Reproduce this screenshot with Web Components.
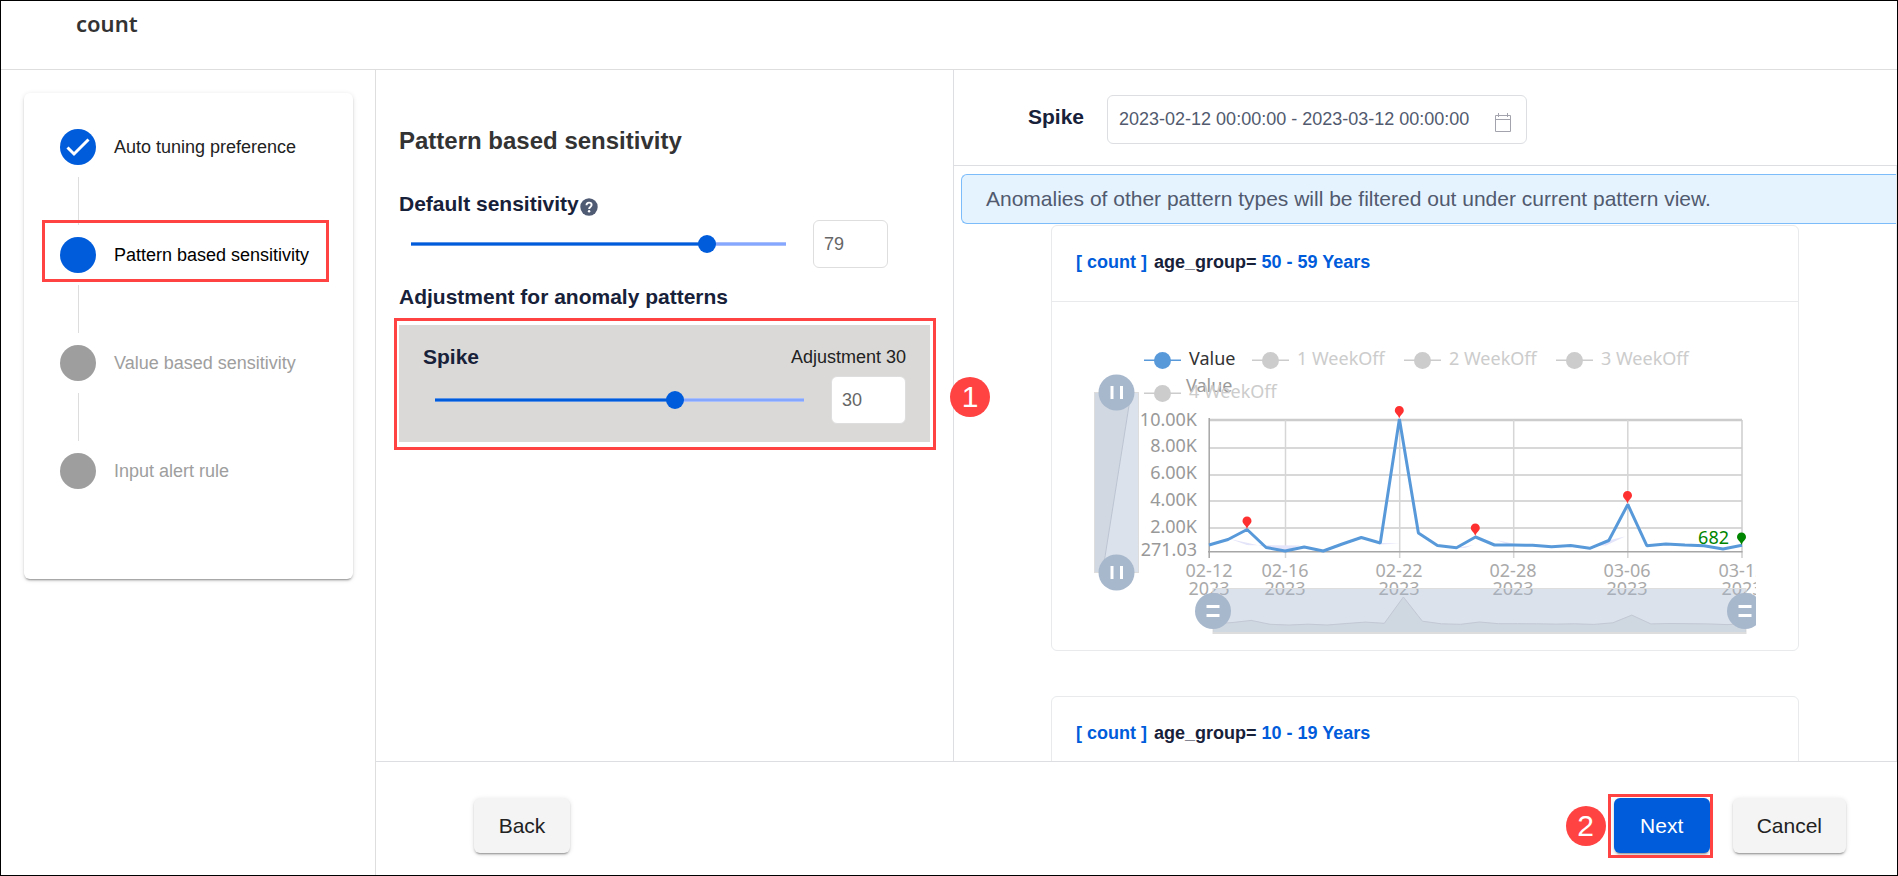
<!DOCTYPE html>
<html lang="en">
<head>
<meta charset="utf-8">
<title>count - Pattern based sensitivity</title>
<style>
html, body { margin: 0; height: 100%; }
body { font-family: "Liberation Sans", Arial, sans-serif; color: #172139; background: #fff; }
</style>
</head>
<body>
<tuning-app></tuning-app>
<script>
function define(name, render, after) {
  customElements.define(name, class extends HTMLElement {
    connectedCallback() {
      if (this.shadowRoot) return;
      const root = this.attachShadow({ mode: 'open' });
      root.innerHTML = '<style>*{box-sizing:border-box}</style>' + render(this);
      if (after) after(this, root);
    }
  });
}

/* Red frame with a numbered badge laid over the slotted content */
define('callout-frame', el => `
<style>
:host { display: block; position: relative; }
.frame { position: absolute; inset: var(--frame-inset); border: 3px solid #ff4343; pointer-events: none; }
.badge { position: absolute; top: var(--badge-top, 50%); width: 40px; height: 40px; margin-top: -20px; border-radius: 50%;
  background: #ff4343; color: #fff; font-size: 30px; line-height: 40px; text-align: center; }
.right { left: calc(100% + 17px); }
.left { right: calc(100% + 5px); }
</style>
<slot></slot>
<div class="frame">${el.getAttribute('number') ? `<span class="badge ${el.getAttribute('side')}">${el.getAttribute('number')}</span>` : ''}</div>`);

define('wizard-step', el => `
<style>
:host { display: block; color: #222; font-size: 18px; }
:host([state="current"]) { color: #000; }
:host([state="todo"]) { color: #9e9e9e; }
.row { display: flex; gap: 18px; line-height: 36px; }
.dot { width: 36px; height: 36px; border-radius: 50%; background: #005cdb; }
:host([state="todo"]) .dot { background: #9e9e9e; }
svg { display: block; }
</style>
<div class="row"><span class="dot">${el.getAttribute('state') === 'done'
  ? '<svg width="36" height="36" viewBox="0 0 36 36" fill="none" stroke="#fff" stroke-width="3"><path d="M7.500 18.500 14 25 28.500 10.500"/></svg>' : ''}</span><slot></slot></div>`);

define('wizard-steps', () => `
<style>
:host { display: block; padding: 36px 36px 90px; background: #fff; border-radius: 6px;
  box-shadow: 0 3px 1px -2px rgba(0,0,0,.2), 0 2px 2px 0 rgba(0,0,0,.14), 0 1px 5px 0 rgba(0,0,0,.12); }
.line { width: 1px; height: 48px; margin: 12px 18px; background: #ddd; }
callout-frame { --frame-inset: -17px -12px -9px -18px; }
</style>
<wizard-step state="done">Auto tuning preference</wizard-step>
<div class="line"></div>
<callout-frame><wizard-step state="current">Pattern based sensitivity</wizard-step></callout-frame>
<div class="line"></div>
<wizard-step state="todo">Value based sensitivity</wizard-step>
<div class="line"></div>
<wizard-step state="todo">Input alert rule</wizard-step>`);

define('sensitivity-slider', el => {
  const v = +el.getAttribute('value'), min = +el.getAttribute('min'), max = +el.getAttribute('max');
  return `
<style>
:host { display: block; }
.head { display: flex; justify-content: space-between; line-height: 24px; }
.title { display: flex; align-items: center; gap: 1px; }
label { font-size: 21px; font-weight: bold; }
.title svg { display: block; margin-top: 7px; }
.note { font-size: 18px; color: #222; }
.row { display: flex; align-items: center; gap: 18px; padding-left: 3px; margin-top: var(--row-gap, 4px); }
input { font: inherit; }
input[type=range] { appearance: none; flex: 1; min-width: 0; height: 18px; margin: 0; --fill: ${(v - min) / (max - min)};
  background:
    linear-gradient(#5a93e6 0 1px, #005cdb 1px 3px, #5a93e6 3px) 9px 7px / calc((100% - 18px) * var(--fill)) 4px no-repeat,
    linear-gradient(#a9bffb 0 1px, #86a7ff 1px 3px, #a9bffb 3px) 9px 7px / calc(100% - 18px) 4px no-repeat; }
input[type=range]::-webkit-slider-thumb { appearance: none; width: 18px; height: 18px; border-radius: 50%; background: #005cdb; }
input[type=number] { appearance: textfield; width: 75px; height: 48px; padding: 0 10px; border: 1px solid #dedede;
  border-radius: 6px; background: #fff; font-size: 18px; color: #666; }
input::-webkit-inner-spin-button { appearance: none; }
</style>
<div class="head"><span class="title"><label for="range">${el.getAttribute('label')}</label>${el.hasAttribute('help') ? `
<svg width="18" height="18" viewBox="0 0 18 18" role="img" aria-label="Help"><circle cx="9" cy="9" r="8.700" fill="#4f5a73"/><path d="M6.500 7.200C6.500 3.700 11.600 3.900 11.600 7c0 1.900-2.500 1.900-2.500 3.900" fill="none" stroke="#fff" stroke-width="1.900"/><circle cx="9.100" cy="13.200" r="1.200" fill="#fff"/></svg>` : ''}</span>
<span class="note"><slot></slot></span></div>
<div class="row"><input id="range" type="range" min="${min}" max="${max}" value="${v}">
<input id="num" type="number" aria-label="${el.getAttribute('label')} value" value="${v}"></div>`;
}, (el, root) => {
  const range = root.getElementById('range'), num = root.getElementById('num');
  const sync = (from, to) => {
    to.value = from.value;
    range.style.setProperty('--fill', (range.value - range.min) / (range.max - range.min));
  };
  range.addEventListener('input', () => sync(range, num));
  num.addEventListener('input', () => sync(num, range));
});

define('sensitivity-panel', () => `
<style>
:host { display: block; padding: 57px 23px 0; }
h1 { margin: 0 0 36px; font-size: 24px; line-height: 28px; color: #333; }
h2 { margin: 17px 0 16px; font-size: 21px; line-height: 24px; }
.default { margin-right: 42px; }
.pattern { padding: 20px 24px 18px; background: #dad9d7; --row-gap: 7px; }
callout-frame { --frame-inset: -7px -6px -8px -5px; --badge-top: 60%; }
</style>
<h1>Pattern based sensitivity</h1>
<sensitivity-slider class="default" label="Default sensitivity" help min="0" max="100" value="79"></sensitivity-slider>
<h2>Adjustment for anomaly patterns</h2>
<callout-frame number="1" side="right"><div class="pattern">
<sensitivity-slider label="Spike" min="-100" max="100" value="30">Adjustment 30</sensitivity-slider>
</div></callout-frame>`);

define('date-range', () => `
<style>
:host { display: flex; gap: 23px; padding: 25px 0 21px 74px; border-bottom: 1px solid #dcdee2; }
label { font-size: 21px; font-weight: bold; line-height: 24px; padding-top: 10px; }
.box { display: flex; align-items: center; width: 420px; height: 49px; padding: 0 14px 0 11px; border: 1px solid #dcdee2; border-radius: 6px; }
input { flex: 1; min-width: 0; height: 46px; padding: 0; border: 0; background: none; font: 18px "Liberation Sans", Arial, sans-serif; color: #515a6e; }
button { padding: 5px 0 0; border: 0; background: none; line-height: 0; }
</style>
<label for="dates">Spike</label>
<div class="box"><input id="dates" type="text" value="2023-02-12 00:00:00 - 2023-03-12 00:00:00">
<button type="button" aria-label="Open calendar"><svg width="18" height="19" viewBox="0 0 18 19" fill="none" stroke="#a3a3ad" stroke-width="1"><path d="M1.500 2.500H16.500V18.500H1.500ZM1.500 6.500H16.500M4.500 0V4M13.500 0V4"/></svg></button></div>`);

define('series-card', el => `
<style>
:host { display: block; border: 1px solid #e8eaec; border-radius: 6px; background: #fff; }
h3 { display: flex; gap: 5px; margin: 0; padding: 24px 24px 27px; border-bottom: 1px solid #e8eaec; font-size: 18px; line-height: 24px; }
b { color: #005cdb; }
.measure { margin-right: 2px; }
</style>
<h3><b class="measure">[ count ]</b><span>age_group=</span><b>${el.getAttribute('group')}</b></h3>
<slot></slot>`);

define('trend-chart', () => {
  const ys = [545,539.5,529.5,547.5,551,547,551,544,537.5,543,419,533,545.5,547.7,537,545,545,545.3,546.7,545.5,548.3,540.5,504.5,545.7,544,545,545.7,549,545.3];
  const step = 533 / 28;
  const line = ys.map((y, i) => `${(1209 + i * step).toFixed(1)},${y}`).join(' ');
  const mini = ys.map((y, i) => `${(1213 + i * step).toFixed(1)},${(625 - (551 - y) * .212).toFixed(1)}`).join(' ');
  const legend = (x, y, text, on) => `<g fill="${on ? '#5899da' : '#ccc'}"><rect x="${x}" y="${y - 1}" width="37" height="1.500"/><circle cx="${x + 18.5}" cy="${y}" r="8.500"/></g>
    <text x="${x + 45}" y="${y + 4.5}" fill="${on ? '#333' : '#ccc'}">${text}</text>`;
  const pin = (x, y, c) => `<path fill="${c}" d="M${x} ${y + 8}C${x - 1} ${y + 4} ${x - 4.5} ${y + 3} ${x - 4.5} ${y}A4.500 4.500 0 0 1 ${x + 4.5} ${y}C${x + 4.5} ${y + 3} ${x + 1} ${y + 4} ${x} ${y + 8}Z"/>`;
  const vHandle = y => `<circle cx="1116.500" cy="${y}" r="18" fill="#a7b7cc"/><path d="M1112 ${y - 6.5}v13M1121.500 ${y - 6.5}v13" stroke="#fff" stroke-width="3"/>`;
  const hHandle = x => `<circle cx="${x}" cy="611" r="18" fill="#a7b7cc"/><path d="M${x - 6.5} 606.500h13M${x - 6.5} 615.500h13" stroke="#fff" stroke-width="3"/>`;
  return `
<style>
:host { display: block; padding: 0 42px 0 40px; }
svg { display: block; width: 100%; height: auto; font-family: "Noto Sans", "Open Sans", sans-serif; font-size: 18px; }
</style>
<svg viewBox="1092 302 664 348" role="img" aria-label="Value by day">
<g fill="none" stroke="#ccc">
  <path stroke-width="1.300" d="M1209 448H1742M1209 475H1742M1209 501H1742M1209 528H1742"/>
  <path stroke-width="2.500" d="M1209 420H1742"/>
  <path stroke="#d6d6d6" stroke-width="1.500" d="M1285.500 420V558M1399.700 420V558M1513.700 420V558M1627.800 420V558"/>
  <path d="M1742 420V558" stroke-width="1.500"/>
</g>
<path d="M1209.200 418V558M1208 551.700H1742.500" stroke="#a6a6a6" stroke-width="1.500" fill="none"/>
<path d="M1230 539 1247 545 1300 545.500 1285 551 1266 547ZM1380 543l20 .5-20 1ZM1496 540l22 4.500h-10ZM1456 548l17-3-8 3ZM1608 540.500l17-4-19 9-10 0Z" fill="#e4e4fa"/>
<g fill="#999">
  <text x="1186" y="391.500">Value</text>
  <g text-anchor="end">
    <text x="1197" y="426">10.00K</text><text x="1197" y="452">8.00K</text><text x="1197" y="479">6.00K</text>
    <text x="1197" y="506">4.00K</text><text x="1197" y="533">2.00K</text><text x="1197" y="556">271.03</text>
  </g>
  <g text-anchor="middle" fill="#aaa">
    ${[['02-12', 1209], ['02-16', 1285], ['02-22', 1399], ['02-28', 1513], ['03-06', 1627], ['03-12', 1742]].map(([d, x]) =>
      `<text x="${x}" y="577">${d}</text><text x="${x}" y="595">2023</text>`).join('')}
  </g>
</g>
${legend(1144, 360.5, 'Value', true)}${legend(1252, 360.5, '1 WeekOff')}${legend(1404, 360.5, '2 WeekOff')}${legend(1556, 360.5, '3 WeekOff')}${legend(1144, 393.5, '4 WeekOff')}
<polyline points="${line}" fill="none" stroke="#5899da" stroke-width="3" stroke-linejoin="bevel"/>
${pin(1247, 521, '#ff3030')}${pin(1399.3, 410.5, '#ff3030')}${pin(1475.3, 528, '#ff3030')}${pin(1627.5, 495.5, '#ff3030')}${pin(1741.5, 537, '#008500')}
<text x="1729" y="543.500" text-anchor="end" fill="#008500">682</text>
<rect x="1094.500" y="392.500" width="44" height="180" fill="#a7b7cc" fill-opacity=".4" stroke="#ddd"/>
<path d="M1095 393H1131L1104 561V572H1095Z" fill="#8292a8" fill-opacity=".12"/>
<path d="M1131 393 1104 563" stroke="#bcc4d2"/>
${vHandle(392.5)}${vHandle(572.5)}
<rect x="1213" y="588.500" width="533" height="45" fill="#a7b7cc" fill-opacity=".4" stroke="#ddd"/>
<polygon points="1213,633 ${mini} 1746,633" fill="#8292a8" fill-opacity=".14"/>
<polyline points="${mini}" fill="none" stroke="#c3c9d4"/>
<path d="M1213 633H1746" stroke="#ddd" stroke-width="2"/>
${hHandle(1213)}${hHandle(1745)}
</svg>`;
});

define('preview-panel', () => `
<style>
:host { display: flex; flex-direction: column; overflow: hidden; }
.list { flex: 1; min-height: 0; overflow: hidden; border-right: 1px solid #e8eaec; padding: 8px 0 0 7px; }
.alert { height: 50px; padding: 12px 24px; border: 1px solid #7cbcfb; border-right: 0; border-radius: 6px 0 0 6px; background: #e5f3ff; color: #515a6e; font-size: 21px; line-height: 24px; white-space: nowrap; }
.cards { display: grid; gap: 45px; margin: 1px 97px 0 90px; }
</style>
<date-range></date-range>
<div class="list">
<div class="alert" role="status">Anomalies of other pattern types will be filtered out under current pattern view.</div>
<div class="cards">
<series-card group="50 - 59 Years"><trend-chart></trend-chart></series-card>
<series-card group="10 - 19 Years"></series-card>
</div></div>`);

define('raised-button', () => `
<style>
:host { display: block; }
button { display: block; height: 55px; padding: 0 24px; border: 0; border-radius: 6px; background: #f4f4f4; color: #222;
  font: 21px "Liberation Sans", Arial, sans-serif; min-width: 96px;
  box-shadow: 0 3px 1px -2px rgba(0,0,0,.2), 0 2px 2px 0 rgba(0,0,0,.14), 0 1px 5px 0 rgba(0,0,0,.12); }
:host([primary]) button { background: #005cdb; color: #fff; }
</style>
<button type="button"><slot></slot></button>`);

define('tuning-app', () => `
<style>
:host { display: flex; flex-direction: column; height: 100vh; border: 1px solid #000; box-sizing: border-box; overflow: hidden; }
header { height: 69px; padding: 8px 75px; border-bottom: 1px solid #dedede; font: 600 22px/28px "Noto Sans", "Open Sans", sans-serif; color: #333; }
main { display: flex; flex: 1; min-height: 0; }
aside { width: 375px; padding: 23px 22px 0 23px; border-right: 1px solid #dedede; }
.work { display: flex; flex-direction: column; flex: 1; min-width: 0; }
.panes { display: flex; flex: 1; min-height: 0; }
sensitivity-panel { width: 578px; position: relative; z-index: 1; border-right: 1px solid #dcdee2; box-sizing: border-box; }
preview-panel { flex: 1; min-width: 0; }
footer { display: flex; align-items: flex-start; gap: 23px; height: 114px; padding: 36px 51px 0 98px; border-top: 1px solid #dcdee2; }
.spacer { flex: 1; }
callout-frame { --frame-inset: -4px -3px -5px -6px; }
</style>
<header>count</header>
<main>
<aside><wizard-steps></wizard-steps></aside>
<div class="work">
<div class="panes"><sensitivity-panel></sensitivity-panel><preview-panel></preview-panel></div>
<footer><raised-button>Back</raised-button><span class="spacer"></span>
<callout-frame number="2" side="left"><raised-button primary>Next</raised-button></callout-frame>
<raised-button>Cancel</raised-button></footer>
</div>
</main>`);
</script>
</body>
</html>
